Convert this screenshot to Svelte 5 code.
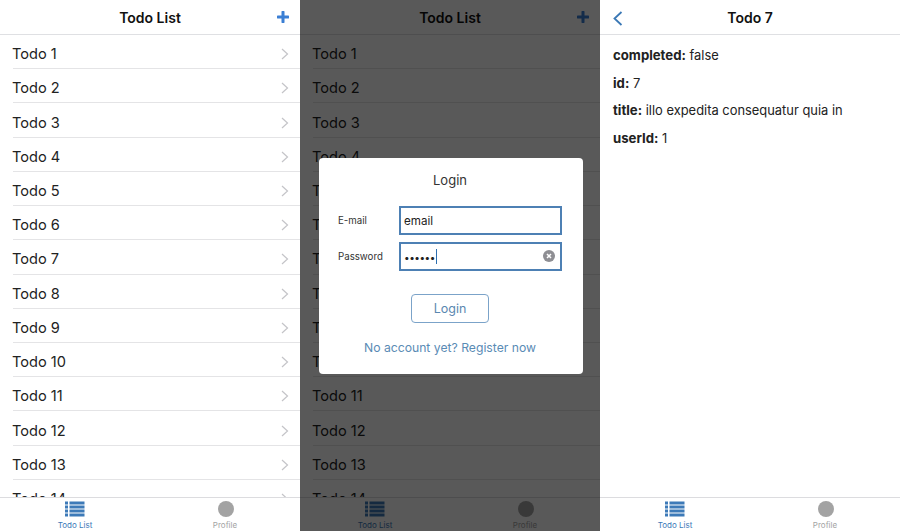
<script>
  const todos = Array.from({ length: 14 }, (_, i) => `Todo ${i + 1}`)
  const fields = [
    { key: 'completed', value: 'false' },
    { key: 'id', value: '7' },
    { key: 'title', value: 'illo expedita consequatur quia in' },
    { key: 'userId', value: '1' }
  ]
</script>

{#snippet tabbar()}
  <footer class="tabbar">
    <div class="tab active">
      <svg width="20" height="16" viewBox="0 0 20 16">
        <g fill="currentColor">
          <rect x="0" y="0.5" width="3" height="3" />
          <rect x="4.5" y="0.5" width="15" height="3" />
          <rect x="0" y="4.5" width="3" height="3" />
          <rect x="4.5" y="4.5" width="15" height="3" />
          <rect x="0" y="8.5" width="3" height="3" />
          <rect x="4.5" y="8.5" width="15" height="3" />
          <rect x="0" y="12.5" width="3" height="3" />
          <rect x="4.5" y="12.5" width="15" height="3" />
        </g>
      </svg>
      <span>Todo List</span>
    </div>
    <div class="tab">
      <i class="avatar"></i>
      <span>Profile</span>
    </div>
  </footer>
{/snippet}

{#snippet listScreen(chevrons)}
  <header class="nav">
    <h1>Todo List</h1>
    <svg class="plus" width="12" height="12" viewBox="0 0 12 12">
      <path d="M6 1v10M1 6h10" stroke="currentColor" stroke-width="3" stroke-linecap="round" />
    </svg>
  </header>
  <ul class="list">
    {#each todos as todo}
      <li>
        <div class="row">
          <span>{todo}</span>
          {#if chevrons}
            <svg width="8" height="12" viewBox="0 0 8 12">
              <path d="M1 1l5.5 5L1 11" fill="none" stroke="#c4c4c8" stroke-width="1.2" />
            </svg>
          {/if}
        </div>
      </li>
    {/each}
  </ul>
  {@render tabbar()}
{/snippet}

<div class="screens">
  <section class="phone">
    {@render listScreen(true)}
  </section>

  <section class="phone">
    {@render listScreen(false)}
    <div class="overlay">
      <form class="modal">
        <h2>Login</h2>
        <div class="field">
          <span class="label">E-mail</span>
          <div class="input">email</div>
        </div>
        <div class="field">
          <span class="label">Password</span>
          <div class="input">
            <span class="dots">••••••</span><i class="caret"></i>
            <svg class="clear" width="12" height="12" viewBox="0 0 12 12">
              <circle cx="6" cy="6" r="6" fill="#8e8e93" />
              <path d="M4 4l4 4M8 4l-4 4" stroke="#fff" stroke-width="1.5" />
            </svg>
          </div>
        </div>
        <div class="submit">Login</div>
        <div class="register">No account yet? Register now</div>
      </form>
    </div>
  </section>

  <section class="phone">
    <header class="nav">
      <svg class="back" width="10" height="15" viewBox="0 0 10 15">
        <path d="M8.5 1L1.5 7.5l7 6.5" fill="none" stroke="currentColor" stroke-width="1.8" />
      </svg>
      <h1>Todo 7</h1>
    </header>
    <div class="detail">
      {#each fields as f}
        <p><b>{f.key}:</b> {f.value}</p>
      {/each}
    </div>
    {@render tabbar()}
  </section>
</div>

<style>
  :global(body) {
    margin: 0;
    background: #fff;
    font-family: Inter, "Liberation Sans", sans-serif;
  }
  .screens {
    display: flex;
    width: 900px;
    height: 531px;
    overflow: hidden;
  }
  .phone {
    position: relative;
    display: flex;
    flex-direction: column;
    width: 300px;
    height: 531px;
    background: #fff;
    overflow: hidden;
  }
  .nav {
    position: relative;
    flex: none;
    height: 34px;
    display: flex;
    align-items: center;
    justify-content: center;
    border-bottom: 1px solid #dfe0e3;
  }
  h1 {
    margin: 0;
    font-size: 14px;
    font-weight: 600;
    color: #111;
  }
  .plus {
    position: absolute;
    right: 11px;
    top: 11px;
    color: #3b7fd4;
  }
  .back {
    position: absolute;
    left: 13px;
    top: 11px;
    color: #3a78b5;
  }
  .list {
    flex: 1;
    min-height: 0;
    margin: 0;
    padding: 0 0 0 13px;
    list-style: none;
    overflow: hidden;
  }
  li {
    height: 34.23px;
    box-sizing: border-box;
    border-bottom: 1px solid #e4e4e6;
  }
  .row {
    height: 100%;
    box-sizing: border-box;
    padding: 5px 11px 0 0;
    display: flex;
    align-items: center;
    justify-content: space-between;
    font-size: 14.6px;
    color: #222;
  }
  .row span {
    margin-left: -1px;
  }
  .tabbar {
    flex: none;
    height: 34px;
    display: flex;
    box-sizing: border-box;
    border-top: 1px solid #dcdcdf;
    background: #fff;
    position: relative;
  }
  .tab {
    flex: 1;
    display: flex;
    flex-direction: column;
    align-items: center;
    padding-top: 3px;
    gap: 3px;
    color: #a3a3a3;
    font-size: 8px;
  }
  .tab.active {
    color: #3d7ab8;
  }
  .avatar {
    display: block;
    width: 16px;
    height: 16px;
    margin-left: 1px;
    border-radius: 50%;
    background: #a3a3a3;
  }
  .overlay {
    position: absolute;
    inset: 0;
    padding-left: 2px;
    background: rgba(0, 0, 0, 0.65);
    display: flex;
    align-items: flex-start;
    justify-content: center;
  }
  .modal {
    width: 264px;
    height: 216px;
    margin-top: 158px;
    box-sizing: border-box;
    padding: 14px 21px 0 19px;
    background: #fff;
    border-radius: 4px;
    display: flex;
    flex-direction: column;
  }
  h2 {
    margin: 0 0 18px;
    font-size: 13px;
    line-height: 16px;
    font-weight: 400;
    text-align: center;
    color: #333;
  }
  .field {
    display: flex;
    align-items: center;
    height: 29px;
    margin-bottom: 7px;
  }
  .label {
    width: 61px;
    font-size: 9.7px;
    color: #333;
  }
  .input {
    position: relative;
    flex: 1;
    height: 29px;
    box-sizing: border-box;
    border: 2px solid #4d80b4;
    padding-left: 3px;
    display: flex;
    align-items: center;
    font-size: 11.6px;
    color: #222;
  }
  .dots {
    font-size: 10px;
    letter-spacing: -0.5px;
  }
  .caret {
    width: 1px;
    height: 15px;
    margin-left: 1px;
    background: #2d6fb0;
  }
  .clear {
    position: absolute;
    right: 5px;
    top: 6px;
  }
  .submit {
    align-self: center;
    width: 78px;
    height: 29px;
    margin-top: 16px;
    box-sizing: border-box;
    border: 1px solid #7ba3c9;
    border-radius: 4px;
    display: flex;
    align-items: center;
    justify-content: center;
    font-size: 12.5px;
    color: #5a87b0;
  }
  .register {
    margin-top: 17px;
    text-align: center;
    font-size: 12.2px;
    color: #5a8bb5;
  }
  .detail {
    flex: 1;
    padding: 12px 13px 0;
    font-size: 12.9px;
    color: #222;
  }
  .detail p {
    margin: 0 0 10.6px;
    line-height: 16px;
  }
  .detail b {
    font-size: 13.2px;
    font-weight: 700;
  }
</style>
